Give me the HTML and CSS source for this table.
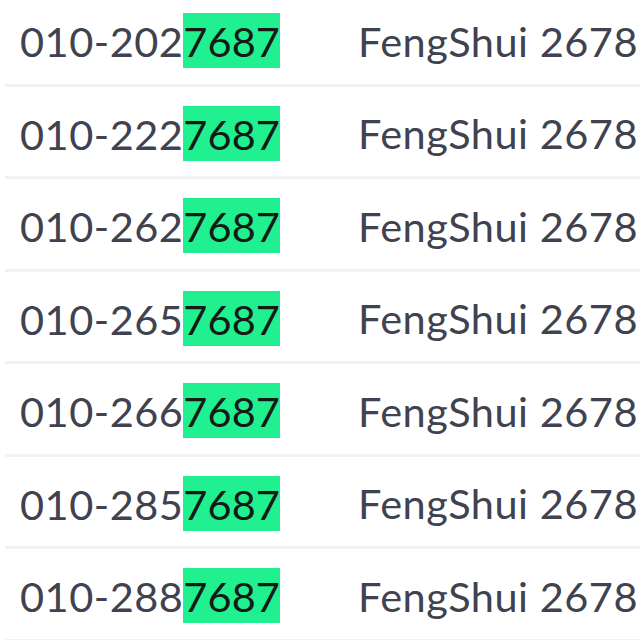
FILE: index.html
```html
<!DOCTYPE html>
<html>
<head>
<meta charset="utf-8">
<link rel="stylesheet" href="styles.css">
</head>
<body>
<div class="list">
  <div class="row"><div class="phone">010-202<span class="hl">7687</span></div><div class="name">FengShui 2678</div></div>
  <div class="row"><div class="phone">010-222<span class="hl">7687</span></div><div class="name">FengShui 2678</div></div>
  <div class="row"><div class="phone">010-262<span class="hl">7687</span></div><div class="name">FengShui 2678</div></div>
  <div class="row"><div class="phone">010-265<span class="hl">7687</span></div><div class="name">FengShui 2678</div></div>
  <div class="row"><div class="phone">010-266<span class="hl">7687</span></div><div class="name">FengShui 2678</div></div>
  <div class="row"><div class="phone">010-285<span class="hl">7687</span></div><div class="name">FengShui 2678</div></div>
  <div class="row"><div class="phone">010-288<span class="hl">7687</span></div><div class="name">FengShui 2678</div></div>
</div>
</body>
</html>
```
FILE: styles.css
```css
html, body {
  margin: 0;
  padding: 0;
  background: #ffffff;
  overflow: hidden;
}
body {
  font-family: Lato, "Open Sans", sans-serif;
  color: #40424f;
}
.list {
  margin-top: -6px;
  margin-left: 5px;
}
.row {
  box-sizing: border-box;
  height: 92.5px;
  display: flex;
  align-items: center;
  padding-left: 15px;
  padding-top: 5px;
  border-bottom: 3px solid #f1f1f6;
  white-space: nowrap;
  font-size: 41.5px;
  letter-spacing: 0.5px;
}
.phone {
  width: 338px;
  flex: none;
  line-height: 55px;
}
.hl {
  display: inline-block;
  background: #20f08f;
  color: #151a17;
  height: 55px;
  line-height: 55px;
  padding-top: 1px;
  box-sizing: border-box;
  letter-spacing: 0.1px;
}
.name {
  flex: none;
  line-height: 55px;
}
```
